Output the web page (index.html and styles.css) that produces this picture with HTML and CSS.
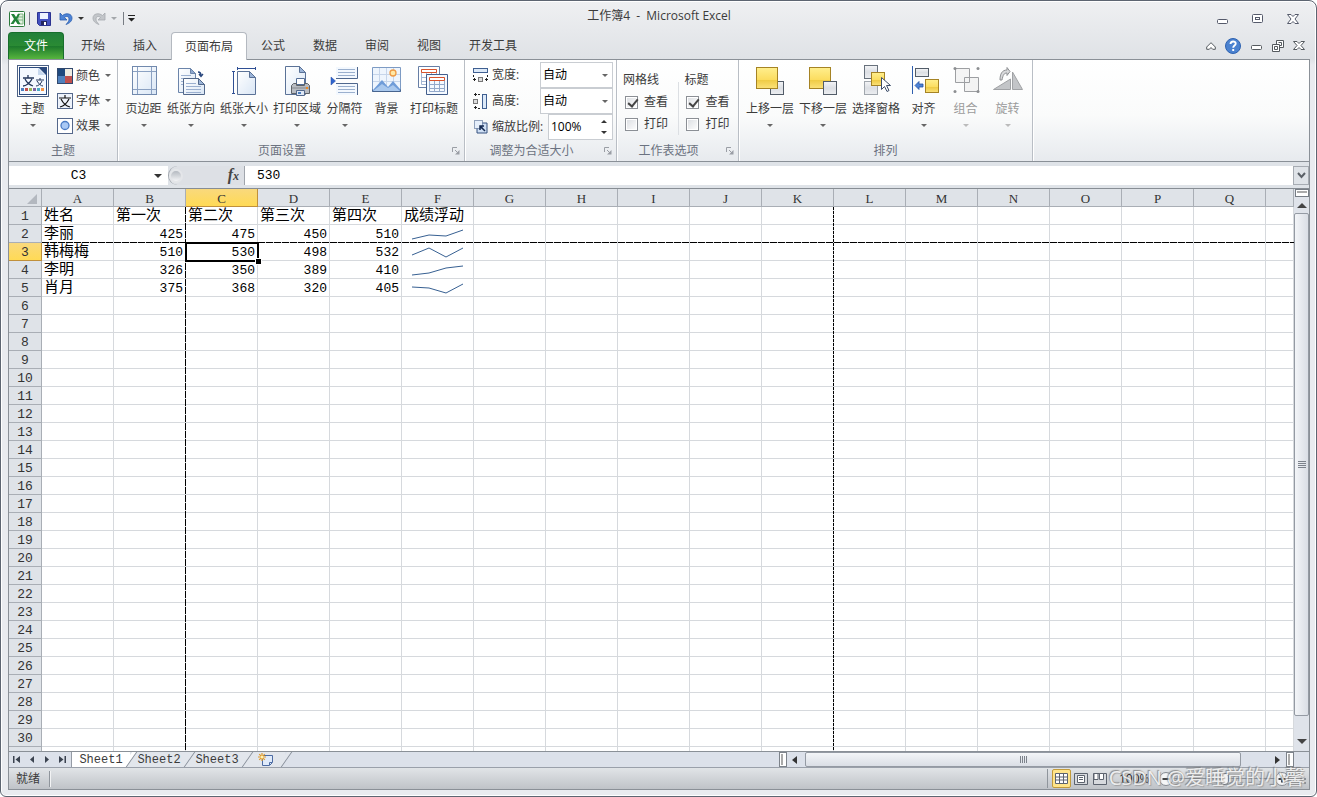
FILE: index.html
```html
<!DOCTYPE html>
<html lang="zh-CN">
<head>
<meta charset="utf-8">
<title>工作簿4 - Microsoft Excel</title>
<link rel="stylesheet" href="styles.css">
</head>
<body>
<svg width="0" height="0" class="defs" aria-hidden="true">
  <defs>
    <linearGradient id="yellow" x1="0" y1="0" x2="0" y2="1"><stop offset="0" stop-color="#ffef8e"/><stop offset=".6" stop-color="#fbdc5e"/><stop offset=".6" stop-color="#efcb45"/><stop offset="1" stop-color="#fbe27a"/></linearGradient>
    <linearGradient id="silver" x1="0" y1="0" x2="0" y2="1"><stop offset="0" stop-color="#f4f5f7"/><stop offset=".5" stop-color="#dcdfe4"/><stop offset="1" stop-color="#eceef1"/></linearGradient>
    <linearGradient id="paper" x1="0" y1="0" x2="1" y2="1"><stop offset="0" stop-color="#ffffff"/><stop offset="1" stop-color="#d9e6f5"/></linearGradient>
  </defs>
</svg>
<div class="window">
  <header class="titlebar">
    <div class="quick">
      <svg width="16" height="16" viewBox="0 0 16 16"><rect x=".5" y=".5" width="15" height="15" rx="1" fill="#fff" stroke="#2c7a3c"/><path d="M9 3h5v10H9z" fill="#e4f2e2" stroke="#7fb583"/><path d="M9 6h5M9 9h5" stroke="#7fb583"/><path d="M2 3h3l2 3 2-3h2L8.300 8 11.500 13h-3L6.500 10 4.500 13h-3l3.500-5z" fill="#23843a"/></svg>
      <span class="bar"></span>
      <button aria-label="保存"><svg width="14" height="14" viewBox="0 0 14 14"><path d="M.5.5h13v13H2.500l-2-2z" fill="#4451c0" stroke="#2b3290"/><rect x="3" y="1" width="8" height="6" fill="#eef3ff"/><rect x="4" y="9" width="6" height="4" fill="#23265e"/><rect x="7" y="10" width="2" height="3" fill="#fff"/></svg></button>
      <button aria-label="撤消" class="undo"><svg width="14" height="14" viewBox="0 0 14 14"><path d="M1 1v7h7L5.500 5.500C7 4 10 4 10 7c0 2-1 3.500-3 5.500C11 11 13 9 13 6 13 1.500 7 .5 3.500 3.500z" fill="#4d83d6" stroke="#2b5eae" stroke-width=".8"/></svg></button>
      <i class="tri dark"></i>
      <button aria-label="恢复" class="redo"><svg width="14" height="14" viewBox="0 0 14 14"><path d="M13 1v7H6l2.500-2.500C7 4 4 4 4 7c0 2 1 3.500 3 5.500C3 11 1 9 1 6c0-4.500 6-5.500 9.500-2.500z" fill="#c3c6ca" stroke="#a6aaaf" stroke-width=".8"/></svg></button>
      <i class="tri pale"></i>
      <span class="bar last"></span>
      <button aria-label="自定义快速访问工具栏"><svg width="7" height="7" viewBox="0 0 7 7"><path d="M0 0h7v1H0zM0 3h7L3.500 6.500z" fill="#222"/></svg></button>
    </div>
    <h1>工作簿4 &nbsp;-&nbsp; Microsoft Excel</h1>
    <div class="controls">
      <button aria-label="最小化"><svg width="12" height="12" viewBox="0 0 12 12"><rect x=".5" y="6.500" width="10" height="4" rx="1" fill="#fff" stroke="#555a6b"/></svg></button>
      <button aria-label="还原"><svg width="12" height="12" viewBox="0 0 12 12"><rect x=".5" y="1.500" width="10" height="8" rx="1" fill="#fff" stroke="#555a6b"/><rect x="3.500" y="4.500" width="4" height="2" fill="#fff" stroke="#555a6b"/></svg></button>
      <button aria-label="关闭"><svg width="12" height="12" viewBox="0 0 12 12"><path d="M.5 1.500h3.500L6 3.500l2-2h3.500L8 6l3.500 4.500H8l-2-2-2 2H.5L4 6z" fill="#fff" stroke="#555a6b"/></svg></button>
    </div>
  </header>

  <nav class="tabs">
    <button class="file">文件</button>
    <button>开始</button><button>插入</button><button class="active">页面布局</button><button>公式</button><button>数据</button><button>审阅</button><button>视图</button><button>开发工具</button>
    <div class="docctl">
      <button aria-label="折叠功能区"><svg width="10" height="8" viewBox="0 0 10 8"><path d="M5 .7 9.300 5v2.300H6.700L5 5.500 3.300 7.300H.7V5z" fill="#fff" stroke="#555a5f"/></svg></button>
      <button aria-label="帮助" class="help"><svg width="16" height="16" viewBox="0 0 16 16"><circle cx="8" cy="8" r="7.500" fill="#4b82d0" stroke="#2e62b0"/><path d="M5.500 6c0-3.500 5.300-3.200 5.200-.3C10.600 7.500 8.200 7.700 8.200 9.800M8.200 11v2" fill="none" stroke="#fff" stroke-width="1.900"/></svg></button>
      <button aria-label="最小化工作簿"><svg width="12" height="8" viewBox="0 0 12 8"><rect x=".5" y="3.500" width="10" height="4" rx="1" fill="#fff" stroke="#555a5f"/></svg></button>
      <button aria-label="还原工作簿"><svg width="12" height="12" viewBox="0 0 12 12"><path d="M4.500.5h7v7h-7z" fill="#fff" stroke="#555a5f"/><path d="M6.500 2.500h3v3h-2" fill="none" stroke="#555a5f"/><path d="M.5 4.500h7v7h-7z" fill="#fff" stroke="#555a5f"/><path d="M2.500 6.500h3v3h-3z" fill="none" stroke="#555a5f"/></svg></button>
      <button aria-label="关闭工作簿"><svg width="12" height="12" viewBox="0 0 12 12"><path d="M.5 1.500h3.500L6 3.500l2-2h3.500L8 5.500l3.500 4H8l-2-2-2 2H.5l3.500-4z" fill="#fff" stroke="#555a5f"/></svg></button>
    </div>
  </nav>

  <main class="client">
    <div class="ribbon">
      <section class="group theme">
        <div class="body">
          <button class="big"><svg width="32" height="32" viewBox="0 0 32 32"><rect x=".5" y=".5" width="31" height="31" fill="#fff" stroke="#4c6285"/><rect x="2.500" y="2.500" width="27" height="27" fill="#f4f9ff" stroke="#2b4a7d"/><path d="M21 2h9v27h-1V10z" fill="#2b4a7d"/><path d="M21 3v7h7z" fill="#c6d8ee"/><path d="M6 13h11M11 10v3M8 14c2 4 5 6 8 7M15 14c-2 4-6 7-9 7" stroke="#22355a" stroke-width="1.300" fill="none"/><path d="M19 15h8M23 13v2M20 16c2 3 4 5 6 5M25 16c-1 3-4 5-6 5" stroke="#22355a" fill="none"/><path d="M4 23h3v3H4z" fill="#4d80c0"/><path d="M8 23h3v3H8z" fill="#c0504d"/><path d="M12 23h3v3h-3z" fill="#9bbb59"/><path d="M16 23h3v3h-3z" fill="#8064a2"/><path d="M20 23h3v3h-3z" fill="#4bacc6"/><path d="M24 23h3v3h-3z" fill="#f79646"/></svg><span>主题</span><i class="tri"></i></button>
          <div class="smalls">
            <button><svg width="16" height="16" viewBox="0 0 16 16"><path d="M0 0h8v8H0z" fill="#1f497d"/><path d="M8 0h8v8H8z" fill="#eeece1"/><path d="M0 8h8v8H0z" fill="#4f81bd"/><path d="M8 8h8v8H8z" fill="#c0504d"/><rect x=".5" y=".5" width="15" height="15" fill="none" stroke="#31486d"/></svg>颜色<i class="tri"></i></button>
            <button><svg width="16" height="16" viewBox="0 0 16 16"><rect x=".5" y=".5" width="15" height="15" fill="#eef3fb" stroke="#54678a"/><path d="M2 5h12M8 2v3M4 6c2 4 5 7 9 8M12 6c-2 4-5 7-9 8" fill="none" stroke="#111" stroke-width="1.200"/></svg>字体<i class="tri"></i></button>
            <button><svg width="16" height="16" viewBox="0 0 16 16"><rect x=".5" y=".5" width="15" height="15" fill="#fff" stroke="#54678a"/><circle cx="8" cy="7.500" r="4" fill="#a9c9f5" stroke="#4a7bc4" stroke-width="1.300"/></svg>效果<i class="tri"></i></button>
          </div>
        </div>
        <footer>主题</footer>
      </section>

      <section class="group setup">
        <div class="body">
          <button class="big"><svg width="32" height="32" viewBox="0 0 32 32"><rect x="4.500" y="1.500" width="24" height="28" fill="url(#paper)" stroke="#7189ad"/><path d="M9.500 2v27M23.500 2v27M5 6.500h23M5 24.500h23" stroke="#8ba1c2"/></svg><span>页边距</span><i class="tri"></i></button>
          <button class="big"><svg width="32" height="32" viewBox="0 0 32 32"><path d="M3.500 3.500h12l5 5v19h-17z" fill="url(#paper)" stroke="#6b84aa"/><path d="M15.500 3.500v5h5z" fill="#8fa9cf" stroke="#6b84aa"/><path d="M6 10.500h10M6 13.500h10M6 16.500h6M6 19.500h6" stroke="#9bb0d0"/><path d="M8.500 13.500h15l6 6v10h-21z" fill="url(#paper)" stroke="#52688b"/><path d="M23.500 13.500v6h6z" fill="#9bb4d8" stroke="#52688b"/><path d="M11 18.500h10M11 21.500h15M11 24.500h15M11 27.500h15" stroke="#9bb0d0"/><path d="M23 7c2 0 3 1 3 3.500M24 9l2 2.500L28 9" fill="none" stroke="#27457c" stroke-width="1.300"/></svg><span>纸张方向</span><i class="tri"></i></button>
          <button class="big"><svg width="32" height="32" viewBox="0 0 32 32"><path d="M9.500 6.500h12l6 6v17h-18z" fill="url(#paper)" stroke="#5b7297"/><path d="M21.500 6.500v6h6z" fill="#9bb4d8" stroke="#5b7297"/><path d="M9 3.500h19M9.500 2v3M27.500 2v3M5.500 7v22M4 6.500h3M4 28.500h3" stroke="#2f4f94"/></svg><span>纸张大小</span><i class="tri"></i></button>
          <button class="big"><svg width="32" height="32" viewBox="0 0 32 32"><path d="M4.500 1.500h14l6 6v22h-20z" fill="url(#paper)" stroke="#5b7297"/><path d="M18.500 1.500v6h6z" fill="#9bb4d8" stroke="#5b7297"/><path d="M15.500 13.500h8v6h-8z" fill="#fff" stroke="#556f98"/><path d="M10.500 20.500l2-2h3v2h8v-2h3l2 2v8h-18z" fill="#b8bcc2" stroke="#5d6268"/><path d="M11 23h17" stroke="#84898f"/><path d="M15.500 25.500h8v5h-8z" fill="#dfe8f5" stroke="#52688b"/><path d="M17 27h3v2h-3z" fill="#4d80c0"/><path d="M25 22h2v2h-2z" fill="#f08a24"/></svg><span>打印区域</span><i class="tri"></i></button>
          <button class="big"><svg width="32" height="32" viewBox="0 0 32 32"><path d="M7 2h22v12H7zM7 18h22v12H7z" fill="#f3f8fe"/><path d="M7 13.500h21.500V2M7 18.500h21.500V30" fill="none" stroke="#4f678e"/><path d="M9 4.500h17M9 7.500h17M9 10.500h17M9 21.500h17M9 24.500h17M9 27.500h17" stroke="#9bb0ce"/><path d="M2 12v8l4.500-4z" fill="#2f65cf" stroke="#244ba0" stroke-width=".5"/></svg><span>分隔符</span><i class="tri"></i></button>
          <button class="big"><svg width="32" height="32" viewBox="0 0 32 32"><path d="M1.500 2.500h28v24h-28z" fill="#eef5fd" stroke="#7d9bc4"/><path d="M8.500 3v23M15.500 3v23M22.500 3v23M2 9.500h27M2 16.500h27" stroke="#c6d5ea"/><circle cx="22" cy="8" r="3" fill="#ffe9a6" stroke="#ef9a45" stroke-width="1.300"/><path d="M2 25 11 15l6 7 5-6 7 8v2H2z" fill="#6f9cd8"/><path d="M2 26l9-7 6 4 5-3 7 6z" fill="#a9c8ed"/><path d="M1.500 24.500v2h28v-2" fill="none" stroke="#48658f"/></svg><span>背景</span></button>
          <button class="big"><svg width="32" height="32" viewBox="0 0 32 32"><path d="M.5 1.500h21v21H.5z" fill="#fff" stroke="#667ea5"/><path d="M3.500 4.500h15v15h-15zM3.500 12.500h15M3.500 16.500h15M8.500 8v11M13.500 8v11" fill="none" stroke="#a4b6d3"/><path d="M3.500 4.500h15v3h-15z" fill="#fff" stroke="#d9532c"/><path d="M8.500 9.500h21v20h-21z" fill="#f4f9ff" stroke="#435e8c"/><path d="M11.500 15.500h15v11h-15zM11.500 19.500h15M11.500 23.500h15M16.500 15v11M21.500 15v11" fill="none" stroke="#93a9cb"/><path d="M11.500 12.500h15v3h-15z" fill="#fff" stroke="#d9532c"/></svg><span>打印标题</span></button>
        </div>
        <footer>页面设置<svg class="launch" width="8" height="8" viewBox="0 0 8 8"><path d="M.5 5V.5H5" fill="none" stroke="#9a9ea5"/><path d="M3 3l3 3" stroke="#9a9ea5"/><path d="M7.500 3v4.500H3z" fill="#9a9ea5"/></svg></footer>
      </section>

      <section class="group fit">
        <div class="body fields">
          <div class="field"><svg width="16" height="16" viewBox="0 0 16 16"><rect x=".5" y="1.500" width="14" height="4" fill="#dce9f8" stroke="#3f5f91"/><path d="M.5 8v2M14.500 8v2M0 12.500h3M12 12.500h3M1.500 11v3M13.500 11v3" stroke="#222"/><rect x="5.500" y="10.500" width="4" height="4" fill="#ddd" stroke="#777"/></svg><label for="w">宽度:</label><span class="drop"><select id="w"><option>自动</option></select></span></div>
          <div class="field"><svg width="16" height="16" viewBox="0 0 16 16"><rect x="9.500" y="1.500" width="4" height="14" fill="#dce9f8" stroke="#3f5f91"/><path d="M5 1.500h2M5 15.500h2M2.500 0v3M2.500 13v3M1 1.500h3M1 14.500h3" stroke="#222"/><rect x=".5" y="6.500" width="4" height="4" fill="#ddd" stroke="#777"/></svg><label for="h">高度:</label><span class="drop"><select id="h"><option>自动</option></select></span></div>
          <div class="field"><svg width="16" height="16" viewBox="0 0 16 16"><path d="M4 4h10v10H4z" fill="#cfdff4" stroke="#35517f"/><path d="M1.500 1.500h8v8h-8z" fill="#e6effb" stroke="#35517f" stroke-dasharray="1 1"/><path d="M7 7l5 5M7 11V7h4" fill="none" stroke="#142a52" stroke-width="1.500"/></svg><label for="s">缩放比例:</label><span class="spin"><input id="s" value="100%"><i class="tri up"></i><i class="tri down"></i></span></div>
        </div>
        <footer>调整为合适大小<svg class="launch" width="8" height="8" viewBox="0 0 8 8"><path d="M.5 5V.5H5" fill="none" stroke="#9a9ea5"/><path d="M3 3l3 3" stroke="#9a9ea5"/><path d="M7.500 3v4.500H3z" fill="#9a9ea5"/></svg></footer>
      </section>

      <section class="group opts">
        <div class="body">
          <fieldset><legend>网格线</legend><label><input type="checkbox" checked>查看</label><label><input type="checkbox">打印</label></fieldset>
          <fieldset><legend>标题</legend><label><input type="checkbox" checked>查看</label><label><input type="checkbox">打印</label></fieldset>
        </div>
        <footer>工作表选项<svg class="launch" width="8" height="8" viewBox="0 0 8 8"><path d="M.5 5V.5H5" fill="none" stroke="#9a9ea5"/><path d="M3 3l3 3" stroke="#9a9ea5"/><path d="M7.500 3v4.500H3z" fill="#9a9ea5"/></svg></footer>
      </section>

      <section class="group arrange">
        <div class="body">
          <button class="big"><svg width="32" height="32" viewBox="0 0 32 32"><rect x="16.500" y="16.500" width="13" height="13" fill="url(#silver)" stroke="#525c68"/><rect x="2.500" y="2.500" width="21" height="21" fill="url(#yellow)" stroke="#a58324"/></svg><span>上移一层</span><i class="tri"></i></button>
          <button class="big"><svg width="32" height="32" viewBox="0 0 32 32"><rect x="2.500" y="2.500" width="21" height="21" fill="url(#yellow)" stroke="#a58324"/><rect x="16.500" y="16.500" width="13" height="13" fill="url(#silver)" stroke="#525c68"/></svg><span>下移一层</span><i class="tri"></i></button>
          <button class="big"><svg width="32" height="32" viewBox="0 0 32 32"><rect x="4.500" y=".5" width="13" height="13" fill="url(#silver)" stroke="#68717c"/><rect x="4.500" y="16.500" width="13" height="13" fill="url(#silver)" stroke="#a1a7ae"/><rect x="11.500" y="7.500" width="13" height="13" fill="url(#yellow)" stroke="#a58324"/><path d="M21.500 12.500v12l3-3 2.500 5 2-1-2.500-5h4z" fill="#fff" stroke="#3d4e6b"/></svg><span>选择窗格</span></button>
          <button class="big"><svg width="32" height="32" viewBox="0 0 32 32"><path d="M4.500 1v28" stroke="#2f5fae"/><rect x="7.500" y="3.500" width="13" height="8" fill="url(#silver)" stroke="#525c68"/><rect x="17.500" y="14.500" width="13" height="13" fill="url(#yellow)" stroke="#a58324"/><path d="M7 20.500l4-4v2.500h4v3h-4v2.500z" fill="#4d83d6" stroke="#2450a0" stroke-width=".8"/></svg><span>对齐</span><i class="tri"></i></button>
          <button class="big" disabled><svg width="32" height="32" viewBox="0 0 32 32"><path d="M5.500 3.500h14v14h-14zM14.500 12.500h14v14h-14z" fill="#eceded" fill-opacity=".6" stroke="#9d9fa2"/><g fill="#8c8e91"><circle cx="5" cy="3.500" r="1.500"/><circle cx="28" cy="3.500" r="1.500"/><circle cx="5" cy="26.500" r="1.500"/><circle cx="28" cy="26.500" r="1.500"/></g></svg><span>组合</span><i class="tri"></i></button>
          <button class="big" disabled><svg width="32" height="32" viewBox="0 0 32 32"><path d="M1.500 24.500 18.500 14v10.500zM20.500 7v17.500h10z" fill="#c3c5c8" stroke="#a0a2a5"/><path d="M8 15c0-6 2-10 7-10V2.500l3 4-3 4V8c-3 0-4 2-5 7z" fill="#d8d9db" stroke="#8f9194"/></svg><span>旋转</span><i class="tri"></i></button>
        </div>
        <footer>排列</footer>
      </section>
    </div>

    <div class="formula">
      <div class="name"><input aria-label="名称框" value="C3"><i class="tri dark"></i></div>
      <div class="fx"><span class="knob"></span><em>f<small>x</small></em></div>
      <input class="content" aria-label="编辑栏" value="530">
      <button aria-label="展开编辑栏"><svg width="9" height="7" viewBox="0 0 9 7"><path d="M1 1l3.500 4L8 1" fill="none" stroke="#5b6067" stroke-width="2"/></svg></button>
    </div>

    <div class="work">
      <div class="sheet">
        <table><thead><tr id="head"></tr></thead><tbody id="rows"></tbody></table>
        <div class="break across"></div>
        <div class="break col2"></div>
        <div class="break col11"></div>
        <div class="cursor"></div>
      </div>
      <div class="vscroll"><span class="split"></span><i class="tri up"></i><span class="thumb"></span><i class="tri down"></i></div>
    </div>

    <div class="bottom">
      <div class="nav">
        <button aria-label="第一张"><svg width="8" height="7" viewBox="0 0 8 7"><path d="M0 0h1.500v7H0zM7 0v7L2.500 3.500z" fill="#3b4350"/></svg></button>
        <button aria-label="上一张"><svg width="8" height="7" viewBox="0 0 8 7"><path d="M6 0v7L2 3.500z" fill="#3b4350"/></svg></button>
        <button aria-label="下一张"><svg width="8" height="7" viewBox="0 0 8 7"><path d="M2 0v7l4-3.500z" fill="#3b4350"/></svg></button>
        <button aria-label="最后一张"><svg width="8" height="7" viewBox="0 0 8 7"><path d="M6.500 0H8v7H6.500zM1 0v7l4.500-3.500z" fill="#3b4350"/></svg></button>
      </div>
      <div class="sheets">
        <button class="on">Sheet1</button><button>Sheet2</button><button>Sheet3</button>
        <button class="new" aria-label="插入工作表"><svg width="16" height="14" viewBox="0 0 16 14"><path d="M4.500 2.500h10v7l-3 3h-7z" fill="#dfeafa" stroke="#4c6ba3"/><path d="M14 9.500h-2.500V12" fill="none" stroke="#4c6ba3"/><path d="M4 0v8M0 4h8M1.200 1.200l5.600 5.600M6.800 1.200 1.200 6.800" stroke="#e09a2b" stroke-width="1.200"/><circle cx="4" cy="4" r="1.500" fill="#fff3b5"/></svg></button>
      </div>
      <div class="hscroll"><span class="split"></span><i class="tri left"></i><span class="thumb"></span><i class="tri right"></i><span class="split"></span></div>
    </div>

    <footer class="status">
      <span class="ready">就绪</span>
      <div class="views">
        <button class="on" aria-label="普通"><svg width="13" height="11" viewBox="0 0 13 11"><path d="M.5.5h12v10H.5zM.5 4h12M.5 7h12M4.500.5v10M8.500.5v10" fill="#fff" stroke="#5c636e"/></svg></button>
        <button aria-label="页面布局"><svg width="14" height="12" viewBox="0 0 14 12"><path d="M.5.5h13v11H.5z" fill="#d7dade" stroke="#5c636e"/><path d="M3.500 2.500h7v7h-7zM5 4.500h4M5 6.500h4" fill="#fff" stroke="#5c636e"/></svg></button>
        <button aria-label="分页预览"><svg width="14" height="12" viewBox="0 0 14 12"><path d="M.5.5h13v11H.5z" fill="#d7dade" stroke="#5c636e"/><path d="M1 .5h4v6H1zM6.500.5h4v6h-4z" fill="#fff" stroke="#5c636e"/></svg></button>
      </div>
      <span class="pct">100%</span>
      <div class="zoom"><button aria-label="缩小"><svg width="14" height="14" viewBox="0 0 14 14"><circle cx="7" cy="7" r="6.500" fill="#f5f6f7" stroke="#858b92"/><path d="M3.500 7h7" stroke="#444" stroke-width="2"/></svg></button><input type="range" aria-label="显示比例" value="50"><button aria-label="放大"><svg width="14" height="14" viewBox="0 0 14 14"><circle cx="7" cy="7" r="6.500" fill="#f5f6f7" stroke="#858b92"/><path d="M3.500 7h7M7 3.500v7" stroke="#444" stroke-width="2"/></svg></button></div>
      <span class="grip"></span>
      <span class="mark">CSDN @爱睡觉的小馨</span>
    </footer>
  </main>
</div>
<script src="grid.js"></script>
</body>
</html>
```

FILE: styles.css
```css
* { box-sizing: border-box; }
body { margin: 0; background: #fff; color: #3b3b3b; font: 12px/16px "Open Sans", "Noto Sans CJK SC", sans-serif; }
button, input, select { font: inherit; color: inherit; margin: 0; padding: 0; border: 0; background: none; border-radius: 0; }
button { display: flex; align-items: center; justify-content: center; white-space: nowrap; }
svg { display: block; flex: none; }
.defs { position: absolute; }
.window { height: 100vh; display: flex; flex-direction: column; border: 1px solid #5d6571; border-radius: 8px 8px 6px 6px; padding: 0 6px 6px 7px; background: linear-gradient(#eff0f2, #dfe2e6 58px, #e9ebef 64px); box-shadow: inset 0 0 0 1px #fff; }

.tri { flex: none; width: 0; height: 0; border: 3px solid transparent; border-top-color: #666; border-bottom-width: 0; }
.tri.dark { border-width: 4px 4px 0; border-top-color: #333; }
.tri.pale { border-top-color: #a4a7ab; }
.tri.up { border-width: 0 3px 3px; border-color: transparent transparent #333; }
.tri.down { border-top-color: #333; }

.titlebar { display: grid; grid-template-columns: 1fr auto 1fr; height: 31px; }
.titlebar h1 { margin: 0; padding-top: 7px; font-size: 12px; line-height: 16px; font-weight: 400; }
.quick { display: flex; align-items: center; padding: 4px 0 0 1px; }
.bar { width: 1px; height: 13px; background: #777c83; margin: 0 7px 0 4px; }
.bar.last { margin: 0 4px 0 6px; }
.undo, .redo { margin: 0 5px 0 8px; }
.titlebar .tri.dark { border-width: 3px 3px 0; }
.controls { display: flex; justify-content: flex-end; align-items: center; gap: 23px; padding: 4px 11px 0 0; }

.tabs { display: flex; height: 27px; }
.tabs > button { padding: 0 14px; }
.tabs .file { width: 56px; margin-right: 3px; color: #fff; border: 1px solid #176e2c; border-bottom: 0; border-radius: 4px 4px 0 0; background: linear-gradient(#22803a, #2a8b34 50%, #1d7a2c 52%, #57b53e); }
.tabs .active { background: #fff; border: 1px solid #b4b9c0; border-bottom: 0; border-radius: 4px 4px 0 0; padding: 0 13px; margin-bottom: -1px; z-index: 1; }
.docctl { margin-left: auto; display: flex; align-items: center; gap: 9px; padding-right: 5px; }
.docctl .help { margin: 0 1px 0 0; }

.client { flex: 1; min-height: 0; display: flex; flex-direction: column; border: 1px solid #8a9097; background: #dfe3e8; }
.ribbon { display: flex; height: 102px; background: linear-gradient(#fff, #fafbfb 55%, #e7eaee); border-bottom: 1px solid #8a9097; }
.group { display: flex; flex-direction: column; position: relative; border-right: 1px solid #b9bec5; box-shadow: 1px 0 #fff; }
.group .body { flex: 1; display: flex; align-items: flex-start; gap: 5px; padding: 5px 5px 0 7px; }
.group footer { height: 18px; text-align: center; color: #6b7280; position: relative; }
.setup footer, .fit footer, .opts footer { padding-right: 18px; }
.launch { position: absolute; right: 4px; top: 4px; }
.big { flex-direction: column; min-width: 37px; }
.big span { margin: 4px 0 7px; line-height: 16px; }
button:disabled { color: #9b9b9b; }
button:disabled .tri { border-top-color: #bbb; }
.theme { width: 109px; }
.group.theme .body { padding: 5px 5px 0 5px; }
.smalls { display: flex; flex-direction: column; margin: -2px 0 0 1px; }
.smalls button { height: 25px; gap: 3px; }
.smalls .tri { margin-left: 2px; }
.setup { width: 347px; }
.fit { width: 152px; }
.group .fields { flex-direction: column; gap: 0; padding: 2px 3px 0 8px; align-items: stretch; }
.field { display: flex; align-items: center; gap: 3px; height: 26px; white-space: nowrap; }
.drop, .spin { position: relative; display: flex; align-items: center; height: 26px; margin-left: auto; border: 1px solid #c9cdd2; background: #fff; color: #000; }
.drop { width: 73px; }
.spin { width: 65px; }
.drop select, .spin input { appearance: none; width: 100%; padding-left: 2px; outline: 0; }
.drop::after { content: ""; position: absolute; right: 4px; top: 11px; border: 3px solid transparent; border-top-color: #666; border-bottom: 0; }
.spin .tri { position: absolute; right: 5px; top: 5px; }
.spin .down { top: 16px; }
.opts { width: 122px; }
.group.opts .body { gap: 0; padding: 12px 0 0 6px; }
.opts fieldset { border: 0; margin: 0; padding: 0; width: 56px; }
.opts fieldset + fieldset { width: 60px; padding-left: 5px; border-left: 1px solid #dcdfe3; }
.opts legend { padding: 0; height: 19px; }
.opts label { display: flex; align-items: center; gap: 6px; height: 22px; padding-left: 2px; }
.opts input { appearance: none; width: 13px; height: 13px; border: 1px solid #8b8f95; background: linear-gradient(135deg, #dadde1, #fff); box-shadow: inset 0 0 0 1px #fff; }
.opts input:checked::after { content: ""; display: block; width: 4px; height: 8px; margin: 0 0 0 4px; border: solid #444; border-width: 0 2px 2px 0; transform: rotate(40deg); }
.arrange { width: 294px; }

.formula { display: flex; height: 26px; padding: 4px 0 3px; font-family: "Liberation Mono", "Noto Sans CJK SC", monospace; font-size: 13px; color: #000; }
.formula .name { display: flex; align-items: center; width: 159px; background: #fff; padding-right: 6px; }
.formula .name input { flex: 1; min-width: 0; padding-right: 6px; text-align: center; }
.fx { width: 77px; display: flex; justify-content: space-between; align-items: center; padding-right: 5px; border: solid #a0a5ac; border-width: 0 1px; border-radius: 10px 0 0 10px; background: #dde0e5; }
.knob { width: 14px; height: 14px; border-radius: 50%; background: linear-gradient(#b4b9c0, #f3f4f6); border: 2px solid #e4e6e9; }
.fx em { font: italic bold 16px/18px "Liberation Serif", serif; color: #444; }
.fx small { font-size: 12px; }
.formula .content { flex: 1; min-width: 0; padding-left: 12px; background: #fff; }
.formula button { width: 16px; background: #dfe3e8; border: 1px solid #a6abb2; }

.work { flex: 1; min-height: 0; display: flex; border-top: 1px solid #878d94; }
.sheet { flex: 1; min-width: 0; position: relative; overflow: hidden; background: #fff; }
.sheet table { width: 100%; table-layout: fixed; border-collapse: separate; border-spacing: 0; font: 13px/15px "Liberation Mono", "Noto Sans CJK SC", monospace; color: #000; }
.sheet th, .sheet td { width: 72px; height: 18px; padding: 2px 2px 0; border: solid #d6d9dd; border-width: 0 1px 1px 0; white-space: nowrap; text-align: left; }
.sheet th { font-weight: 400; text-align: center; color: #333; background: #dfe3e8; border-color: #a9aeb5; }
.sheet thead th { font-family: "Liberation Serif", serif; }
.sheet thead th:first-child { width: 33px; }
.sheet thead th:last-child { width: auto; }
.sheet .corner svg { margin-left: auto; margin-right: 2px; }
.sheet th.sel { background: linear-gradient(#f9d97d, #ffda55); border-color: #c0903b; }
.sheet td.num { text-align: right; }
.sheet td.cjk { font-size: 15px; }
.sheet td.spark { padding: 0 0 0 7px; }
.break { position: absolute; }
.across { left: 33px; right: 0; top: 53px; height: 1px; background: repeating-linear-gradient(90deg, #000 0 7px, transparent 7px 8px); }
.col2, .col11 { top: 18px; bottom: 0; width: 1px; left: 176px; background: repeating-linear-gradient(#000 0 7px, transparent 7px 8px); }
.col11 { left: 824px; background: repeating-linear-gradient(#000 0 3px, transparent 3px 4px); }
.cursor { position: absolute; left: 176px; top: 53px; width: 74px; height: 20px; border: 2px solid #000; }
.cursor::after { content: ""; position: absolute; right: -4px; bottom: -4px; width: 5px; height: 5px; background: #000; outline: 1px solid #fff; }

.vscroll { width: 15px; display: flex; flex-direction: column; align-items: center; background: #dfe3ea; }
.vscroll .split { width: 14px; height: 8px; background: #fff; border: 1px solid #777d85; box-shadow: inset 0 0 0 1px #fff, inset 0 3px #aaa; }
.vscroll .tri { border-width: 0 5px 5px; margin: 6px 0 5px; border-bottom-color: #444; }
.vscroll .tri.down { border-width: 5px 5px 0; border-color: #444 transparent transparent; margin: 23px 0 7px; }
.thumb { border: 1px solid #949aa3; border-radius: 2px; display: flex; align-items: center; justify-content: center; }
.thumb::after { content: ""; }
.vscroll .thumb { flex: 1; width: 15px; background: linear-gradient(90deg, #f3f5f8, #dadee5); }
.vscroll .thumb::after { width: 8px; height: 7px; background: repeating-linear-gradient(#7c828b 0 1px, transparent 1px 2px); }

.bottom { display: flex; height: 17px; border-top: 1px solid #8a9097; border-bottom: 1px solid #9aa0aa; background: #dce1ea; }
.nav { width: 62px; display: flex; align-items: center; gap: 7px; padding-left: 4px; }
.sheets { display: flex; font: 12px/14px "Liberation Mono", monospace; border-left: 1px solid #959ba5; }
.sheets button { position: relative; width: 58px; padding-top: 1px; background: #e2e6ec; }
.sheets button::after { content: ""; position: absolute; z-index: 1; right: -6px; top: 0; width: 4px; height: 15px; border-left: 1px solid #858c97; background: #e2e6ec; box-shadow: -4px 0 #e2e6ec; transform: skewX(-35deg); }
.sheets .on { background: #fff; }
.sheets .on::after { box-shadow: -4px 0 #fff; }
.sheets .new { width: 39px; }
.sheets .new::after { background: #dce1ea; }
.hscroll { width: 530px; margin-left: auto; display: flex; align-items: center; }
.hscroll .split { width: 8px; height: 15px; background: #fff; border: 1px solid #7d838b; box-shadow: inset 0 0 0 1px #fff, inset 3px 0 #aaa; }
.hscroll > .split:last-child { margin-right: 15px; }
.hscroll .tri.left { border-width: 4px 5px 4px 0; border-color: transparent #333; margin: 0 8px 0 5px; }
.hscroll .tri.right { border-width: 4px 0 4px 5px; border-color: transparent #333; margin: 0 6px 0 34px; }
.hscroll .thumb { flex: 1; height: 15px; background: linear-gradient(#f3f5f8, #dadee5); }
.hscroll .thumb::after { width: 7px; height: 7px; background: repeating-linear-gradient(90deg, #7c828b 0 1px, transparent 1px 2px); }

.status { position: relative; display: flex; align-items: center; height: 21px; background: linear-gradient(#e1e4e7, #bfc3c8); }
.ready { padding: 0 9px 0 7px; border-right: 1px solid #8f959c; box-shadow: 1px 0 #f2f3f4; }
.views { display: flex; align-items: center; margin-left: auto; padding-left: 4px; border-left: 1px solid #8f959c; }
.views button { width: 19px; height: 19px; }
.views .on { border: 1px solid #c29b3c; border-radius: 2px; background: #ffe58a; }
.pct { width: 31px; margin: 0 9px 0 10px; color: #222; }
.zoom { display: flex; align-items: center; }
.zoom input { appearance: none; width: 102px; height: 14px; background: linear-gradient(#8a9097, #8a9097) center / 100% 1px no-repeat; }
.zoom input::-webkit-slider-thumb { appearance: none; width: 9px; height: 12px; background: #f4f5f6; border: 1px solid #737981; border-radius: 1px 1px 4px 4px; }
.grip { width: 9px; height: 9px; margin: 6px 1px 0 10px; background: radial-gradient(circle, #8c9299 1px, transparent 1px) 0 0 / 4px 4px; }
.mark { position: absolute; right: 4px; top: -2px; font-size: 20px; line-height: 24px; color: #f4f4f4; opacity: .8; text-shadow: -1px -1px 1px #777, 1px 1px 1px #999; white-space: nowrap; pointer-events: none; }
```

FILE: grid.js
```js
const letters = "ABCDEFGHIJKLMNOPQ".split("");
const data = [
  ["姓名", "第一次", "第二次", "第三次", "第四次", "成绩浮动"],
  ["李丽", 425, 475, 450, 510, "3,13 20,9 37,10 54,4"],
  ["韩梅梅", 510, 530, 498, 532, "3,11 20,4 37,13 54,4"],
  ["李明", 326, 350, 389, 410, "3,13 20,11 37,6 54,4"],
  ["肖月", 375, 368, 320, 405, "3,7 20,8 37,13 54,4"]
];

document.getElementById("head").innerHTML =
  '<th class="corner"><svg width="10" height="10" viewBox="0 0 10 10"><path d="M10 0v10H0z" fill="#b3b8bf"/></svg></th>' +
  letters.map(l => `<th${l === "C" ? ' class="sel"' : ""}>${l}</th>`).join("") + "<th></th>";

function cell(row, col) {
  const v = data[row] && data[row][col];
  if (v === undefined) return "<td></td>";
  if (typeof v === "number") return `<td class="num">${v}</td>`;
  if (row > 0 && col === 5) {
    return `<td class="spark"><svg width="56" height="16" viewBox="0 0 56 16"><polyline points="${v}" fill="none" stroke="#376092"/></svg></td>`;
  }
  return `<td class="cjk">${v}</td>`;
}

let html = "";
for (let r = 0; r < 31; r++) {
  html += `<tr><th${r === 2 ? ' class="sel"' : ""}>${r < 30 ? r + 1 : ""}</th>`;
  for (let c = 0; c < 18; c++) html += cell(r, c);
  html += "</tr>";
}
document.getElementById("rows").innerHTML = html;
```
